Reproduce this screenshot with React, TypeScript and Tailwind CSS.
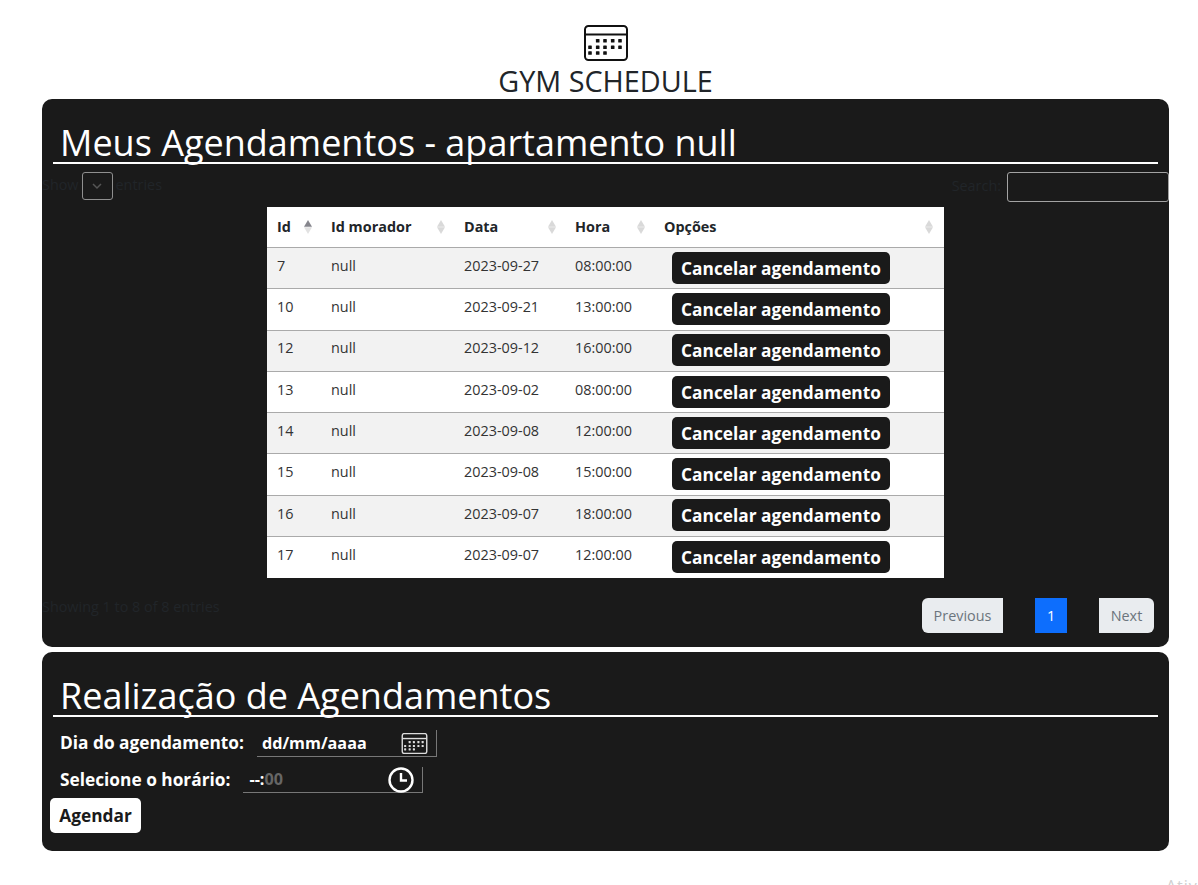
const rows = [
  ['7', '2023-09-27', '08:00:00'],
  ['10', '2023-09-21', '13:00:00'],
  ['12', '2023-09-12', '16:00:00'],
  ['13', '2023-09-02', '08:00:00'],
  ['14', '2023-09-08', '12:00:00'],
  ['15', '2023-09-08', '15:00:00'],
  ['16', '2023-09-07', '18:00:00'],
  ['17', '2023-09-07', '12:00:00'],
];

const columns = [
  { label: 'Id', width: 'w-[54px]', active: true },
  { label: 'Id morador', width: 'w-[133px]', active: false },
  { label: 'Data', width: 'w-[111px]', active: false },
  { label: 'Hora', width: 'w-[89px]', active: false },
  { label: 'Opções', width: 'w-[290px]', active: false },
];

const dots = [
  [13.7, 15.7], [21, 15.7], [28.7, 15.7], [36, 15.7],
  [6, 22.3], [13.7, 22.3], [21, 22.3], [28.7, 22.3], [36, 22.3],
  [6, 28], [13.7, 28], [21, 28],
];

function CalendarIcon({ className, strokeWidth = 2 }: { className: string; strokeWidth?: number }) {
  return (
    <svg viewBox="0 0 44 36" className={className} aria-hidden="true">
      <rect x="1" y="1" width="42" height="34" rx="3.5" fill="none" stroke="currentColor" strokeWidth={strokeWidth} />
      <path d="M1 9.5h42" stroke="currentColor" strokeWidth={strokeWidth} />
      {dots.map(([x, y]) => (
        <rect key={`${x}-${y}`} x={x - 1.8} y={y - 1.8} width="3.6" height="3.6" rx="0.6" fill="currentColor" />
      ))}
    </svg>
  );
}

function SortIcon({ active }: { active: boolean }) {
  return (
    <svg viewBox="0 0 8 14" className="h-[14px] w-[8px]" aria-hidden="true">
      <path d="M4 0l4 6.8H0z" fill={active ? '#85858c' : '#d9d9d9'} />
      <path d="M4 14l4-6.8H0z" fill={active ? '#e2e2e2' : '#d9d9d9'} />
    </svg>
  );
}

function SectionTitle({ children }: { children: string }) {
  return (
    <h2 className="mx-[11px] border-b-2 border-white pl-[7px] text-[36px] leading-[39px] text-white">
      {children}
    </h2>
  );
}

export default function App() {
  return (
    <div className="relative h-[885px] overflow-hidden bg-white font-['Open_Sans',sans-serif]">
      <header className="flex flex-col items-center pl-[13px] pt-[25px]">
        <CalendarIcon className="h-[36px] w-[44px] text-[#111]" />
        <h1 className="pt-[2px] text-[28.8px] leading-[36px] text-[#212529]">GYM SCHEDULE</h1>
      </header>

      <main className="ml-[42px] flex w-[1127px] flex-col gap-[5px]">
        <section className="h-[548px] rounded-[10px] bg-[#1a1a1a] pt-[24px]">
          <SectionTitle>Meus Agendamentos - apartamento null</SectionTitle>

          <div className="mt-[8px] flex h-[30px] items-start justify-between text-[14.4px] text-[#212529]">
            <div className="flex items-center gap-[3px]">
              <span className="pb-[3px]">Show</span>
              <span className="flex h-[28px] w-[31px] items-center justify-center rounded-[3px] border border-[#8f8f8f]">
                <svg viewBox="0 0 12 12" className="h-3 w-3 text-[#555]" aria-hidden="true">
                  <path d="M2 4l4 4 4-4" fill="none" stroke="currentColor" strokeWidth="1.5" />
                </svg>
              </span>
              <span className="pb-[3px]">entries</span>
            </div>
            <div className="flex items-center gap-[6px]">
              <span className="pb-[3px]">Search:</span>
              <span className="h-[30px] w-[162px] rounded-[3px] border border-[#a3a3a3]" />
            </div>
          </div>

          <div className="mt-[5px] flex justify-center">
            <table className="w-[677px] table-fixed border-collapse bg-white text-[14.4px] text-[#212529]">
              <thead>
                <tr className="h-[40.5px] border-b border-[#aaa]">
                  {columns.map((col) => (
                    <th key={col.label} className={`${col.width} py-0 pl-[10px] pr-[9px] text-left font-bold last:pr-[11px]`}>
                      <div className="flex items-center justify-between">
                        <span>{col.label}</span>
                        <SortIcon active={col.active} />
                      </div>
                    </th>
                  ))}
                </tr>
              </thead>
              <tbody>
                {rows.map(([id, date, time], i) => (
                  <tr key={id} className={`h-[41.3px] border-b border-[#aaa] last:border-0 ${i % 2 === 0 ? 'bg-[#f2f2f2]' : 'bg-white'}`}>
                    <td className="px-[10px] pb-[5px] text-[#333]">{id}</td>
                    <td className="px-[10px] pb-[5px] text-[#333]">null</td>
                    <td className="px-[10px] pb-[5px] text-[#333]">{date}</td>
                    <td className="px-[10px] pb-[5px] text-[#333]">{time}</td>
                    <td className="pb-[1px] pl-[18px]">
                      <button className="block h-[32px] w-[218px] rounded-[5px] bg-[#1a1a1a] pt-[2px] text-[17.3px] font-bold text-white">
                        Cancelar agendamento
                      </button>
                    </td>
                  </tr>
                ))}
              </tbody>
            </table>
          </div>

          <div className="mt-[20px] flex items-start justify-between pr-[15px] text-[14.4px] text-[#212529]">
            <span className="-mt-[2px]">Showing 1 to 8 of 8 entries</span>
            <nav className="flex gap-[32px] text-[#6c757d]">
              <a className="flex h-[35px] w-[81px] items-center justify-center rounded-l-[6px] bg-[#e9ecef]">Previous</a>
              <a className="flex h-[35px] w-[32px] items-center justify-center bg-[#0d6efd] text-white">1</a>
              <a className="flex h-[35px] w-[55px] items-center justify-center rounded-r-[6px] bg-[#e9ecef]">Next</a>
            </nav>
          </div>
        </section>

        <section className="h-[199px] rounded-[10px] bg-[#1a1a1a] pt-[24px]">
          <SectionTitle>Realização de Agendamentos</SectionTitle>

          <div className="mt-[13px] flex items-center pl-[18px] font-bold text-white">
            <label className="mr-[13px] pb-[1px] text-[17.3px]">Dia do agendamento:</label>
            <div className="flex h-[27px] w-[180px] items-center justify-between border-b border-r border-[#777] pl-[5px] pr-[8px] text-[16.2px]">
              <span>dd/mm/aaaa</span>
              <CalendarIcon className="h-[21px] w-[27px] text-[#ddd]" strokeWidth={2.4} />
            </div>
          </div>

          <div className="mt-[10px] flex items-center pl-[18px] font-bold text-white">
            <label className="mr-[13px] text-[17.3px]">Selecione o horário:</label>
            <div className="flex h-[26px] w-[180px] items-center justify-between border-b border-r border-[#777] pl-[6px] pr-[8px] text-[16.2px]">
              <span>--:<span className="text-[#666]">00</span></span>
              <svg viewBox="0 0 26 26" className="h-[26px] w-[26px]" aria-hidden="true">
                <circle cx="13" cy="13" r="11.5" fill="none" stroke="currentColor" strokeWidth="2.4" />
                <path d="M13 6v7.5h6" fill="none" stroke="currentColor" strokeWidth="2.4" />
              </svg>
            </div>
          </div>

          <button className="ml-[8px] mt-[5px] block h-[35px] w-[91px] rounded-[5px] bg-white text-[17.3px] font-bold text-[#1a1a1a]">
            Agendar
          </button>
        </section>
      </main>

      <span className="absolute left-[1166px] top-[874px] text-[16px] tracking-[1px] text-[#d0d0d0]">Ativar</span>
    </div>
  );
}
